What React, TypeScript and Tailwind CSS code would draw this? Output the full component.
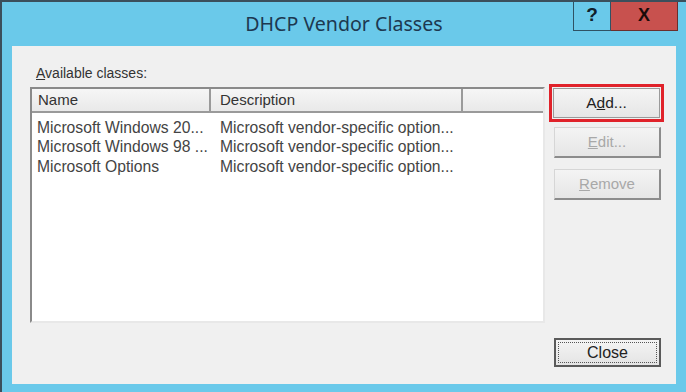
import React from "react";

const font = { fontFamily: '"Liberation Sans", Arial, sans-serif' };

function Btn({ children, disabled }: { children: React.ReactNode; disabled?: boolean }) {
  return (
    <div
      className={`w-[107px] h-[31px] flex items-center justify-center bg-gradient-to-b from-[#f4f4f4] to-[#e6e6e6] border border-t-[#d6d6d6] border-l-[#d6d6d6] border-r-2 border-b-2 border-r-[#8c8c8c] border-b-[#8c8c8c] text-[15px] ${
        disabled ? "text-[#a8a8a8]" : "text-[#333]"
      }`}
    >
      {children}
    </div>
  );
}

export default function App() {
  const rows = [
    ["Microsoft Windows 20...", "Microsoft vendor-specific option..."],
    ["Microsoft Windows 98 ...", "Microsoft vendor-specific option..."],
    ["Microsoft Options", "Microsoft vendor-specific option..."],
  ];
  return (
    <div
      className="w-[686px] h-[392px] bg-[#6ac9ea] border-l-2 border-t-2 border-[#3b4f5c] flex flex-col overflow-hidden"
      style={font}
    >
      <div className="h-[44px] relative flex items-center justify-center">
        <div
          className="text-[19.6px] text-[#1d3850] -mt-[1px]"
          style={{ fontFamily: '"Noto Sans", "Open Sans", sans-serif' }}
        >
          DHCP Vendor Classes
        </div>
        <div className="absolute top-[-2px] right-[8px] flex h-[31px]">
          <div className="w-[38px] h-full border border-t-0 border-[#2f5264] bg-[#6ac9ea] flex items-center justify-center text-[19px] font-bold text-[#10202c]">
            ?
          </div>
          <div className="w-[67px] h-full border border-t-0 border-l-0 border-[#6b2e2c] bg-[#c8514e] flex items-center justify-center text-[18px] font-bold text-[#1a0b0a]">
            X
          </div>
        </div>
      </div>
      <div className="flex-1 ml-[10px] mr-[10px] mb-[8px] bg-[#f0f0f0] flex flex-col">
        <div className="flex">
          <div className="pl-[18px] w-[533px] shrink-0">
            <div className="pl-[6px] pt-[17px] h-[41px] text-[14px] text-[#333]">
              <span className="underline">A</span>vailable classes:
            </div>
            <div className="w-[515px] h-[236px] bg-white border-2 border-t-[#8a8a8a] border-l-[#8a8a8a] border-r-[#e8e8e8] border-b-[#e8e8e8] flex flex-col">
              <div className="h-[24px] flex bg-gradient-to-b from-[#f6f6f6] to-[#e9e9e9] border-b-2 border-[#9a9a9a] text-[15px] text-[#333]">
                <div className="w-[179px] pl-[6px] flex items-center border-r-2 border-[#9a9a9a]">Name</div>
                <div className="w-[252px] pl-[9px] flex items-center border-r-2 border-[#9a9a9a]">Description</div>
                <div className="flex-1" />
              </div>
              <div className="pt-[5px] text-[15.7px] text-[#444]">
                {rows.map((r, i) => (
                  <div key={i} className="h-[19.5px] flex items-center leading-none">
                    <div className="w-[181px] pl-[5px] whitespace-nowrap">{r[0]}</div>
                    <div className="pl-[7px] whitespace-nowrap">{r[1]}</div>
                  </div>
                ))}
              </div>
            </div>
          </div>
          <div className="ml-[4px] pt-[38px] flex flex-col">
            <div className="w-[115px] h-[38px] border-[3px] border-[#e0222a] p-[1px] flex">
              <div className="flex-1 flex items-center justify-center bg-gradient-to-b from-[#f4f4f4] to-[#e6e6e6] border border-[#9a9a9a] text-[15.5px] text-[#222]">
                A<span className="underline">d</span>d...
              </div>
            </div>
            <div className="ml-[5px] mt-[5px]">
              <Btn disabled>
                <span className="underline">E</span>dit...
              </Btn>
            </div>
            <div className="ml-[5px] mt-[11px]">
              <Btn disabled>
                <span className="underline">R</span>emove
              </Btn>
            </div>
          </div>
        </div>
        <div className="flex justify-end pr-[15px] mt-[15px]">
          <div className="w-[107px] h-[29px] border-2 border-[#5a5a5a] bg-gradient-to-b from-[#f4f4f4] to-[#e4e4e4] p-[2px] flex">
            <div className="flex-1 border border-dotted border-[#555] flex items-center justify-center text-[16px] text-[#222]">
              Close
            </div>
          </div>
        </div>
      </div>
    </div>
  );
}
